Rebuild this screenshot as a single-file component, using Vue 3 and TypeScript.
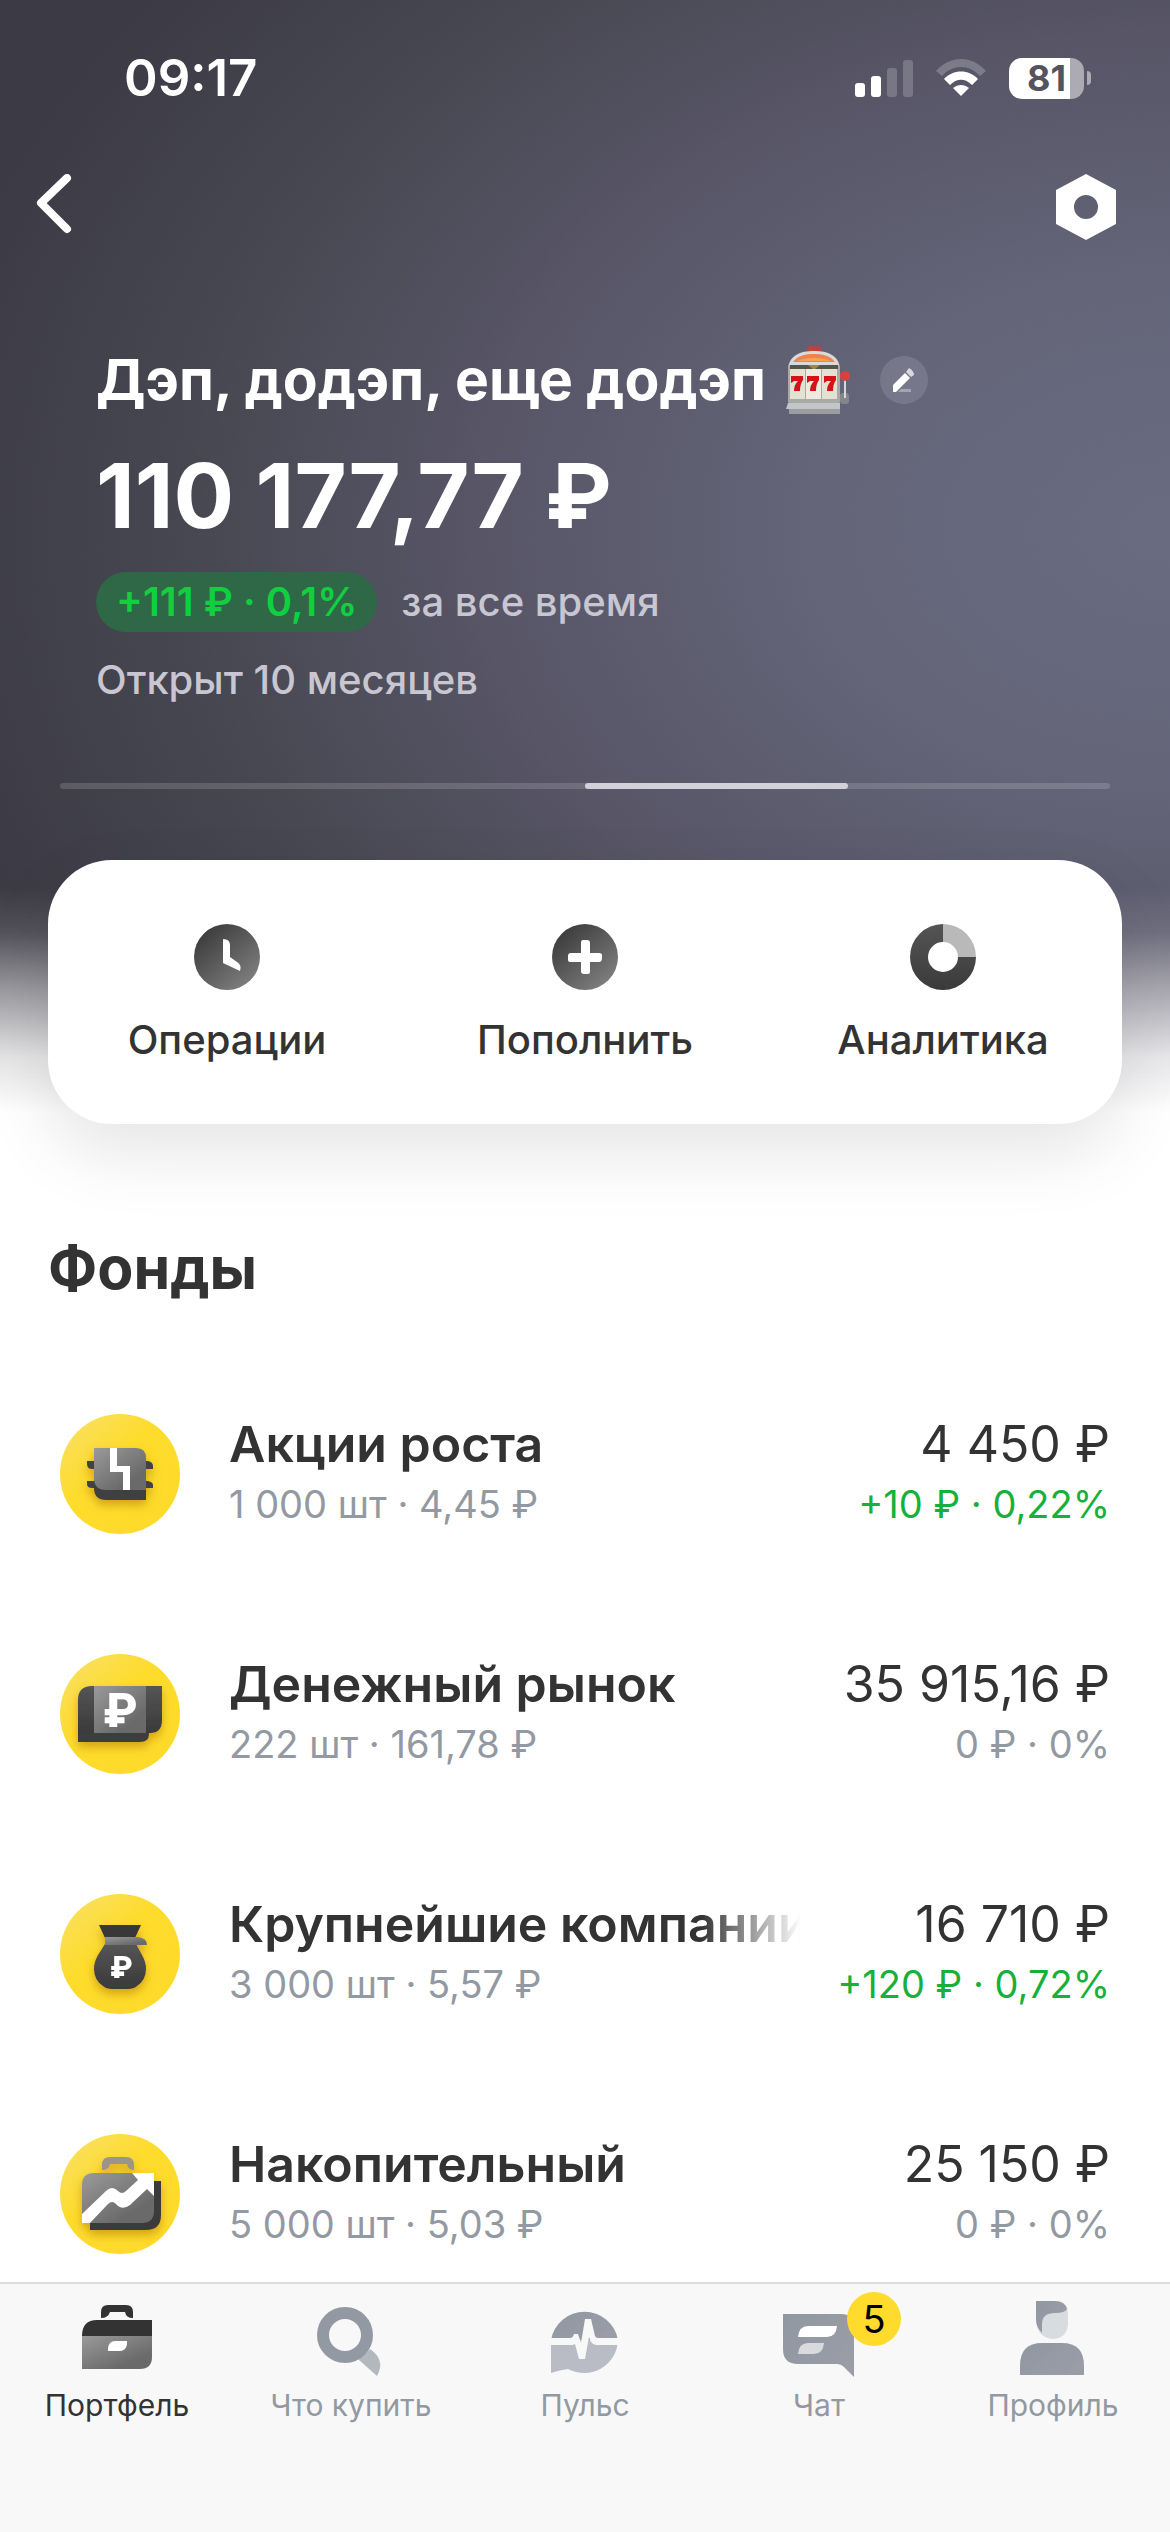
<script setup lang="ts">
type FundIcon = 'chip' | 'cash' | 'bag' | 'case'

interface Fund {
  icon: FundIcon
  name: string
  details: string
  value: string
  change: string
  up: boolean
}

interface Tab {
  id: 'portfolio' | 'search' | 'pulse' | 'chat' | 'profile'
  label: string
  badge?: number
}

const funds: Fund[] = [
  { icon: 'chip', name: 'Акции роста', details: '1 000 шт · 4,45 ₽', value: '4 450 ₽', change: '+10 ₽ · 0,22%', up: true },
  { icon: 'cash', name: 'Денежный рынок', details: '222 шт · 161,78 ₽', value: '35 915,16 ₽', change: '0 ₽ · 0%', up: false },
  { icon: 'bag', name: 'Крупнейшие компании', details: '3 000 шт · 5,57 ₽', value: '16 710 ₽', change: '+120 ₽ · 0,72%', up: true },
  { icon: 'case', name: 'Накопительный', details: '5 000 шт · 5,03 ₽', value: '25 150 ₽', change: '0 ₽ · 0%', up: false },
]

const tabs: Tab[] = [
  { id: 'portfolio', label: 'Портфель' },
  { id: 'search', label: 'Что купить' },
  { id: 'pulse', label: 'Пульс' },
  { id: 'chat', label: 'Чат', badge: 5 },
  { id: 'profile', label: 'Профиль' },
]

const activeTab = 'portfolio'
</script>

<template>
  <div class="screen">
    <svg class="defs" width="0" height="0" aria-hidden="true">
      <defs>
        <linearGradient id="coin" x1="0" y1="0" x2="0.7" y2="0.8">
          <stop offset="0" stop-color="#f9e06a" />
          <stop offset="0.55" stop-color="#fddc2c" />
          <stop offset="1" stop-color="#fedb2a" />
        </linearGradient>
        <linearGradient id="steel" x1="0" y1="0" x2="0.7" y2="0.8">
          <stop offset="0" stop-color="#9a9a9a" />
          <stop offset="1" stop-color="#6a6a6a" />
        </linearGradient>
        <linearGradient id="coal" x1="0" y1="0" x2="0" y2="1">
          <stop offset="0" stop-color="#555" />
          <stop offset="1" stop-color="#3a3a3a" />
        </linearGradient>
        <linearGradient id="disc" x1="0.1" y1="0.1" x2="0.8" y2="0.9">
          <stop offset="0" stop-color="#3a3a3a" />
          <stop offset="1" stop-color="#7c7c7c" />
        </linearGradient>
        <linearGradient id="slate" x1="0" y1="0" x2="1" y2="0.6">
          <stop offset="0" stop-color="#8f98a1" />
          <stop offset="1" stop-color="#9a9ca6" />
        </linearGradient>
        <filter id="drop" x="-30%" y="-30%" width="160%" height="170%">
          <feDropShadow dx="0" dy="5" stdDeviation="5" flood-color="#a86a00" flood-opacity="0.5" />
        </filter>
      </defs>
    </svg>

    <header class="hero">
      <div class="status">
        <time class="clock">09:17</time>
        <div class="indicators">
          <svg width="58" height="37" viewBox="0 0 58 37" aria-hidden="true">
            <rect x="0" y="23" width="10" height="14" rx="3" fill="#fff" />
            <rect x="16" y="16" width="10" height="21" rx="3" fill="#fff" />
            <rect x="32" y="8" width="10" height="29" rx="3" fill="#fff" opacity="0.2" />
            <rect x="48" y="0" width="10" height="37" rx="3" fill="#fff" opacity="0.2" />
          </svg>
          <svg width="50" height="38" viewBox="0 0 50 38" aria-hidden="true">
            <path d="M0 12 C14 -4 36 -4 50 12 L44 17 C33 5 17 5 6 17 Z" fill="#fff" opacity="0.22" />
            <path d="M8 20 C17 10 33 10 42 20 L36 26 C29 19 21 19 14 26 Z" fill="#fff" />
            <path d="M17 29 C22 25 28 25 33 29 L25 37 Z" fill="#fff" />
          </svg>
          <div class="battery"><span class="charge">81</span></div>
        </div>
      </div>

      <div class="toolbar">
        <button class="tool" type="button" aria-label="Назад">
          <svg width="36" height="66" viewBox="0 0 36 66"><path d="M31 4 L5 29 L31 55" fill="none" stroke="#fff" stroke-width="8" stroke-linecap="round" stroke-linejoin="round" /></svg>
        </button>
        <button class="tool" type="button" aria-label="Настройки">
          <svg width="60" height="66" viewBox="0 0 60 66"><path fill="#fff" fill-rule="evenodd" d="M30 0 L60 16 V50 L30 66 L0 50 V16 Z M30 21 a12 12 0 1 0 0 24 a12 12 0 1 0 0 -24 Z" /></svg>
        </button>
      </div>

      <section class="summary">
        <div class="title-line">
          <h1 class="title">Дэп, додэп, еще додэп</h1>
          <svg class="slots" width="66" height="68" viewBox="0 0 66 68" role="img" aria-label="Игровой автомат">
            <rect x="22" y="0" width="13" height="7" rx="2" fill="#b5463c" />
            <path d="M2 22 C4 9 14 5 28 5 C42 5 52 9 54 22 Z" fill="#d9dadb" />
            <path d="M7 16 C12 9 20 8 28 8 C36 8 44 9 49 16 Z" fill="#ee8250" />
            <path d="M11 15 C20 11 36 11 45 15 Z" fill="#f3a54f" />
            <rect x="2" y="19" width="52" height="39" rx="3" fill="#a9a9a6" />
            <rect x="4" y="19" width="48" height="4" fill="#55564a" />
            <path d="M22 19 h12 l-6 5 Z" fill="#a08743" />
            <rect x="4" y="23" width="15" height="30" fill="#e2e1d2" />
            <rect x="20" y="23" width="15" height="30" fill="#ecebde" />
            <rect x="36" y="23" width="15" height="30" fill="#e2e1d2" />
            <g fill="#d51217">
              <path d="M5 30 H17 V34 Q14 38 14 45 H8 Q8 39 12 35 H8 L5 37 Z" />
              <path d="M21 30 H33 V34 Q30 38 30 45 H24 Q24 39 28 35 H24 L21 37 Z" />
              <path d="M38 30 H50 V34 Q47 38 47 45 H41 Q41 39 45 35 H41 L38 37 Z" />
            </g>
            <path d="M2 57 H54 V68 H3 V63 H0 Z" fill="#c4c5c8" />
            <path d="M3 63 H54 V68 H3 Z" fill="#9c9da2" />
            <rect x="54" y="47" width="9" height="11" rx="3" fill="#85868c" />
            <path d="M59 31 V52" stroke="#d8d8dc" stroke-width="2" />
            <circle cx="59" cy="30" r="5" fill="#d8423e" />
          </svg>
          <button class="edit" type="button" aria-label="Переименовать">
            <svg width="24" height="26" viewBox="0 0 24 26">
              <path d="M1 25 V18 L13 6 L18 11 L7 22 L4 25 Z" fill="#fff" />
              <path d="M14 5 L17 1 Q22 4 22 8 L19 10 Z" fill="#d9d8e0" />
              <path d="M9 22 H19 V25 H6 Z" fill="#a5a3b2" />
            </svg>
          </button>
        </div>
        <p class="amount">110 177,77 ₽</p>
        <p class="profit"><span class="pill">+111 ₽ · 0,1%</span><span>за все время</span></p>
        <p class="age">Открыт 10 месяцев</p>
      </section>

      <div class="pager" aria-hidden="true"><span class="page"></span></div>

      <div class="actions">
        <button class="action" type="button">
          <svg width="66" height="66" viewBox="0 0 66 66" aria-hidden="true">
            <circle cx="33" cy="33" r="33" fill="url(#disc)" />
            <path d="M29 15 Q36 15 36 21 V33 L43 38 Q48 41 46 47 L29 39 Z" fill="#fff" />
          </svg>
          Операции
        </button>
        <button class="action" type="button">
          <svg width="66" height="66" viewBox="0 0 66 66" aria-hidden="true">
            <circle cx="33" cy="33" r="33" fill="url(#disc)" />
            <path d="M29 18 Q29 16 31 16 H35 Q38 16 38 19 V29 H47 Q50 29 50 31 V34 Q50 38 47 38 H38 V48 Q38 50 36 50 H32 Q29 50 29 47 V38 H19 Q16 38 16 36 V32 Q16 29 19 29 H29 Z" fill="#fff" />
          </svg>
          Пополнить
        </button>
        <button class="action" type="button">
          <svg width="66" height="66" viewBox="0 0 66 66" aria-hidden="true">
            <path d="M33 0 A33 33 0 1 0 66 33 H48 A15 15 0 1 1 33 18 Z" fill="url(#coal)" />
            <path d="M33 0 A33 33 0 0 1 66 33 H48 A15 15 0 0 0 33 18 Z" fill="#b9b9b9" />
          </svg>
          Аналитика
        </button>
      </div>
    </header>

    <main class="content">
      <h2 class="heading">Фонды</h2>
      <ul class="funds">
        <li v-for="fund in funds" :key="fund.name" class="fund">
          <svg class="logo" width="120" height="120" viewBox="0 0 120 120" aria-hidden="true">
            <circle cx="60" cy="60" r="60" fill="url(#coin)" />
            <g v-if="fund.icon === 'chip'" filter="url(#drop)">
              <path d="M27 47 H36 V55 H32 Q27 55 27 50 Z M27 67 H36 V74 H32 Q27 74 27 70 Z M84 47 H88 Q93 48 93 52 V55 H84 Z M84 67 H88 Q93 68 93 71 V74 H84 Z" fill="#424242" />
              <path d="M34 66 H86 V86 H46 Q34 86 34 74 Z" fill="#3f3f3f" />
              <path d="M34 34 H76 Q86 34 86 44 V76 H46 Q34 76 34 64 Z" fill="url(#steel)" />
              <path d="M50 34 H57 V52 H70 V76 H63 V58 H50 Z" fill="#fff" />
            </g>
            <g v-else-if="fund.icon === 'cash'" filter="url(#drop)">
              <path d="M18 60 H89 V80 Q89 88 80 88 H18 Z" fill="#3d3d3d" />
              <path d="M18 46 Q18 32 32 32 H102 V66 Q102 79 90 79 H18 Z" fill="url(#coal)" />
              <rect x="34" y="32" width="52" height="47" fill="url(#steel)" />
              <text x="60" y="73" class="ruble" font-size="46" text-anchor="middle">₽</text>
            </g>
            <g v-else-if="fund.icon === 'bag'" filter="url(#drop)">
              <path d="M39 31 H81 L75 44 H45 Z" fill="#383838" />
              <path d="M45 50 H76 L82 61 Q86 68 86 75 Q86 86 77 92 Q74 95 68 95 H52 Q46 95 43 92 Q34 86 34 75 Q34 68 38 61 Z" fill="url(#coal)" />
              <path d="M45 43 H78 Q87 44 87 51 H45 Z" fill="url(#steel)" />
              <text x="61" y="84" class="ruble" font-size="30" text-anchor="middle">₽</text>
            </g>
            <g v-else filter="url(#drop)">
              <path d="M42 36 V31 Q42 23 50 23 H66 Q74 23 74 31 V36 Q68 36 67 30 H50 Q49 36 42 36 Z" fill="#9a9588" />
              <path d="M90 47 H101 V81 Q101 96 86 96 H30 V80 H90 Z" fill="#3b3b3b" />
              <path d="M22 51 Q22 39 34 39 H94 V77 Q94 89 82 89 H22 Z" fill="url(#steel)" />
              <path d="M22 80 L46 57 Q52 51 58 57 Q62 61 66 57 L78 46 L72 39 H94 V62 L87 55 L70 71 Q62 77 56 70 Q52 66 48 70 L30 89 H22 Z" fill="#fff" />
            </g>
          </svg>
          <div class="info">
            <h3 class="name">{{ fund.name }}</h3>
            <p class="details">{{ fund.details }}</p>
          </div>
          <div class="numbers">
            <p class="value">{{ fund.value }}</p>
            <p class="details" :class="{ up: fund.up }">{{ fund.change }}</p>
          </div>
        </li>
      </ul>
    </main>

    <nav class="tabs">
      <a v-for="tab in tabs" :key="tab.id" href="#" class="tab" :class="{ active: tab.id === activeTab }">
        <span class="glyph">
          <svg width="72" height="80" viewBox="0 0 72 80" aria-hidden="true">
            <g v-if="tab.id === 'portfolio'">
              <path d="M20 18 V12 Q20 5 27 5 H45 Q52 5 52 12 V18 Q45 18 44 12 H29 Q27 18 20 18 Z" fill="#333" />
              <path d="M1 36 H71 V57 Q71 69 59 69 H1 Z" fill="url(#steel)" />
              <path d="M1 36 Q1 20 16 20 H71 V36 Z" fill="#333" />
              <path d="M27 51 V48 Q28 41 34 41 H46 V44 Q45 51 39 51 Z" fill="#fff" />
            </g>
            <g v-else-if="tab.id === 'search'">
              <path d="M43 60 L55 49 Q71 60 62 76 L44 60 Z" fill="#b3b8bf" />
              <circle cx="30" cy="35" r="22" fill="none" stroke="#9299a2" stroke-width="12" />
            </g>
            <g v-else-if="tab.id === 'pulse'">
              <path d="M2 40 A34 34 0 0 1 69 40 Z" fill="url(#slate)" />
              <path d="M2 40 H69 A34 34 0 0 1 19 69 Q11 70 2 73 Z" fill="#b9bcc5" />
              <path d="M0 38 H21 Q24 38 25 34 H29 L32 43 L36 19 H42 L46 36 Q47 38 49 38 H72 V45 H48 Q42 45 40 37 L36 59 H30 L26 44 Q25 45 23 45 H0 Z" fill="#f8f8f8" />
            </g>
            <g v-else-if="tab.id === 'chat'">
              <path d="M0 14 H58 Q71 14 71 27 V77 L61 67 Q58 64 54 64 H15 Q0 64 0 49 Z" fill="url(#slate)" />
              <path d="M15 37 Q16 26 25 26 H54 Q53 37 44 37 Z" fill="#fff" />
              <path d="M15 54 Q16 43 25 43 H41 Q40 54 31 54 Z" fill="#d8dade" />
            </g>
            <g v-else>
              <path d="M19 1 H38 Q51 2 51 14 V24 Q50 38 36 39 Q20 38 19 20 Z" fill="#d9dcde" />
              <path d="M19 1 H38 Q48 1 50 9 Q48 13 38 13 Q25 13 25 24 V33 Q19 27 19 19 Z" fill="url(#slate)" />
              <path d="M3 75 V66 Q3 43 25 43 H45 Q67 43 67 66 V75 Z" fill="url(#slate)" />
            </g>
          </svg>
          <span v-if="tab.badge" class="badge">{{ tab.badge }}</span>
        </span>
        <span>{{ tab.label }}</span>
      </a>
    </nav>
  </div>
</template>

<style>
body {
  margin: 0;
  background: #fff;
}
</style>

<style scoped>
.screen {
  display: flex;
  flex-direction: column;
  min-height: 100vh;
  font-family: Inter, "Noto Sans", sans-serif;
  color: #333;
}

.defs {
  position: absolute;
}

h1,
h2,
h3,
p,
ul {
  margin: 0;
  padding: 0;
}

button {
  padding: 0;
  border: 0;
  background: none;
  color: inherit;
  font: inherit;
}

svg {
  display: block;
  flex: none;
}

.hero {
  position: relative;
  isolation: isolate;
  padding-top: 48px;
  color: #fff;
}

.hero::before {
  content: "";
  position: absolute;
  inset: 0;
  z-index: -1;
  background: radial-gradient(ellipse 108% 80% at 100% 47%, #696b80 0%, #646579 28%, #575566 55%, #474751 78%, #3c3b45 100%);
  mask-image: linear-gradient(#000 79%, rgb(0 0 0 / 88%) 83%, rgb(0 0 0 / 52%) 88%, rgb(0 0 0 / 14%) 94%, transparent 99%);
}

.status {
  display: flex;
  align-items: center;
  justify-content: space-between;
  height: 60px;
  padding: 0 79px 0 124px;
}

.clock {
  font-size: 51px;
  font-weight: 600;
  line-height: 60px;
}

.indicators {
  display: flex;
  align-items: center;
  gap: 23px;
}

.battery {
  position: relative;
  width: 75px;
  height: 41px;
  margin-right: 7px;
  border-radius: 13px;
  background: linear-gradient(to right, #fff 81%, #acabb3 81%);
  color: #55535f;
  text-align: center;
}

.battery::after {
  content: "";
  position: absolute;
  top: 13px;
  right: -7px;
  width: 4px;
  height: 14px;
  border-radius: 0 4px 4px 0;
  background: #acabb3;
}

.charge {
  display: block;
  font-size: 36px;
  font-weight: 700;
  line-height: 41px;
}

.toolbar {
  display: flex;
  justify-content: space-between;
  margin-top: 66px;
  padding: 0 54px 0 36px;
}

.summary {
  margin-top: 104px;
  padding: 0 96px;
  font-size: 40px;
  font-weight: 500;
  line-height: 48px;
  color: #c8c6d1;
}

.title-line {
  display: flex;
  align-items: center;
  color: #fff;
}

.title {
  font-size: 57px;
  font-weight: 700;
  line-height: 72px;
}

.slots {
  margin-left: 20px;
}

.edit {
  display: grid;
  place-items: center;
  width: 48px;
  height: 48px;
  margin-left: 28px;
  border-radius: 50%;
  background: rgb(255 255 255 / 12%);
}

.amount {
  margin-top: 26px;
  font-size: 90px;
  font-weight: 700;
  line-height: 108px;
  color: #fff;
}

.profit {
  display: flex;
  align-items: center;
  gap: 24px;
  margin-top: 22px;
}

.pill {
  padding: 6px 20px;
  border-radius: 30px;
  background: #2e6847;
  color: #10d040;
  font-weight: 600;
}

.age {
  margin-top: 24px;
}

.pager {
  height: 6px;
  margin: 79px 60px 0;
  border-radius: 3px;
  background: rgb(255 255 255 / 15%);
}

.page {
  display: block;
  width: 25%;
  height: 6px;
  margin-left: 50%;
  border-radius: 3px;
  background: #d2d0d8;
}

.actions {
  display: grid;
  grid-template-columns: repeat(3, 1fr);
  margin: 71px 48px 0;
  padding: 64px 0 60px;
  border-radius: 64px;
  background: #fff;
  box-shadow: 0 30px 70px rgb(0 0 0 / 10%);
  color: #333;
}

.action {
  display: flex;
  flex-direction: column;
  align-items: center;
  gap: 26px;
  font-size: 40px;
  font-weight: 500;
  line-height: 48px;
}

.content {
  padding-bottom: 27px;
}

.heading {
  margin: 108px 48px 0;
  font-size: 59px;
  font-weight: 700;
  line-height: 72px;
}

.funds {
  display: flex;
  flex-direction: column;
  gap: 120px;
  margin: 110px 60px 0;
  list-style: none;
}

.fund {
  display: flex;
}

.logo {
  margin-right: 49px;
}

.ruble {
  fill: #fff;
  font-weight: 800;
}

.info {
  flex: 1;
  min-width: 0;
}

.name {
  overflow: hidden;
  white-space: nowrap;
  font-size: 50px;
  font-weight: 600;
  line-height: 60px;
  mask-image: linear-gradient(to left, transparent, #000 100px);
}

.numbers {
  margin-left: 36px;
  text-align: right;
  white-space: nowrap;
}

.value {
  font-size: 50px;
  line-height: 60px;
}

.details {
  margin-top: 6px;
  font-size: 38px;
  line-height: 48px;
  color: #9299a2;
}

.details.up {
  color: #18b03c;
}

.tabs {
  display: grid;
  grid-template-columns: repeat(5, 1fr);
  margin-top: auto;
  padding: 16px 0 106px;
  border-top: 2px solid #dcdcdd;
  background: #f8f8f8;
}

.tab {
  display: flex;
  flex-direction: column;
  align-items: center;
  gap: 4px;
  color: #9299a2;
  font-size: 30px;
  line-height: 42px;
  text-decoration: none;
}

.tab.active {
  color: #333;
}

.glyph {
  position: relative;
}

.badge {
  position: absolute;
  top: -8px;
  left: 64px;
  width: 54px;
  height: 54px;
  border-radius: 50%;
  background: #fedb2c;
  color: #000;
  font-size: 38px;
  line-height: 54px;
  text-align: center;
}
</style>
